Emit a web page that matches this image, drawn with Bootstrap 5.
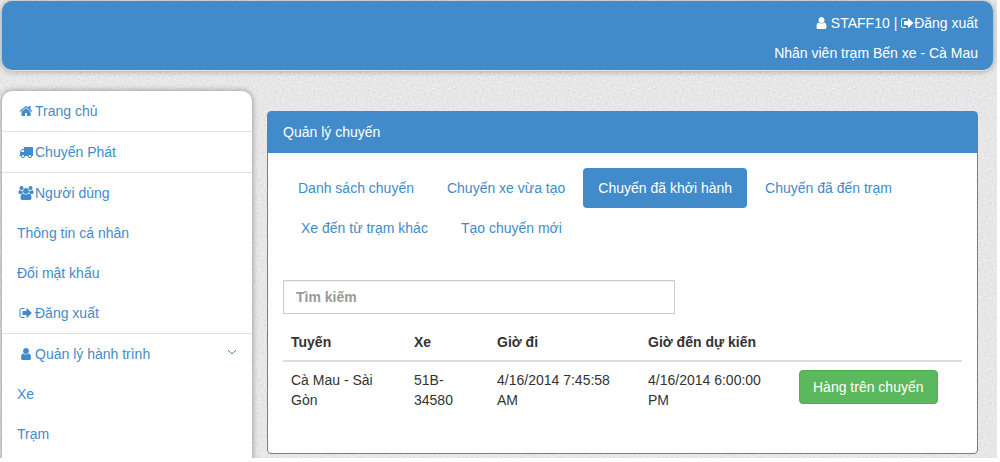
<!DOCTYPE html>
<html lang="vi">
<head>
<meta charset="utf-8">
<meta name="viewport" content="width=device-width, initial-scale=1">
<title>Quản lý chuyến</title>
<link href="https://cdn.jsdelivr.net/npm/bootstrap@5.3.0/dist/css/bootstrap.min.css" rel="stylesheet">
<style>
  :root { --brand: #428bca; }
  body {
    font-family: "Liberation Sans", Arial, sans-serif;
    font-size: 14px;
    line-height: 20px;
    color: #333;
    background: #fff;
  }
  a { color: var(--brand); text-decoration: none; }
  .page-shell {
    height: 100vh;
    border: solid #fff;
    border-width: 0 3px 4px 0;
    overflow: hidden;
    padding: 1px 4px 0 2px;
    background-color: #e7e7e7;
    background-image: url("data:image/svg+xml,%3Csvg xmlns='http://www.w3.org/2000/svg' width='200' height='200'%3E%3Cfilter id='n' x='0' y='0' width='1' height='1' color-interpolation-filters='sRGB'%3E%3CfeTurbulence type='fractalNoise' baseFrequency='.5' numOctaves='2' stitchTiles='stitch'/%3E%3CfeColorMatrix values='.13 0 0 0 .84 .13 0 0 0 .84 .13 0 0 0 .84 0 0 0 0 1'/%3E%3C/filter%3E%3Crect width='200' height='200' filter='url(%23n)'/%3E%3C/svg%3E");
  }
  .top-bar {
    background: var(--brand);
    color: #fff;
    border-radius: 10px;
    padding: 12px 15px 7px;
    margin-bottom: 21px;
    box-shadow: 0 1px 0 #e4e4e4, 0 1px 6px rgba(0, 0, 0, .35);
  }
  .top-bar p { margin-bottom: 10px; }
  .top-bar p:last-child { margin-bottom: 0; }
  .top-bar a { color: #fff; }
  .side-menu {
    flex: 0 0 250px;
    background: #fff;
    border-radius: 10px;
    box-shadow: 0 0 6px rgba(0, 0, 0, .4);
    min-height: 600px;
  }
  .side-menu ul + ul { border-top: 1px solid #e1e1e1; }
  .side-menu .nav-link { color: var(--brand); padding: 10px 15px; }
  .fa-icon { height: 14px; width: 14px; fill: currentColor; vertical-align: -2px; overflow: visible; }
  .fa-fixed { width: 18px; }
  .user-icon { width: 11px; }
  .out-icon { width: 13px; }
  .caret-icon { width: 10px; height: 6px; fill: none; stroke: currentColor; margin-top: 5px; }
  .trip-panel {
    border: 1px solid var(--brand);
    border-radius: 4px;
    margin: 20px 15px 0;
  }
  .trip-panel .card-header {
    background: var(--brand);
    color: #fff;
    border: 0;
    border-radius: 2px 2px 0 0;
    padding: 10px 15px 11px;
  }
  .trip-panel .card-body { padding: 15px; }
  .trip-tabs { --bs-nav-pills-border-radius: 4px; margin-bottom: 32px; }
  .trip-tabs .nav-link { padding: 10px 15px; color: var(--brand); }
  .trip-tabs .nav-link.active { background: var(--brand); color: #fff; }
  .trip-tabs .nav-item + .nav-item { margin-left: 3px; }
  .search-box {
    width: 392px;
    max-width: 100%;
    height: 34px;
    padding: 6px 12px;
    font-size: 14px;
    line-height: 20px;
    font-weight: bold;
    border: 1px solid #ccc;
    border-radius: 0;
    box-shadow: inset 0 1px 1px rgba(0, 0, 0, .075);
    margin-bottom: 10px;
  }
  .search-box::placeholder { color: #999; }
  .trip-table { margin-bottom: 20px; table-layout: fixed; --bs-table-color: #333; color: #333; }
  .trip-table > * > tr > * { padding: 8px; border: 0; }
  .trip-table > thead { border-bottom: 2px solid #ddd; }
  .w-route { width: 123px; }
  .w-bus { width: 83px; }
  .w-time { width: 151px; }
  .btn-cargo {
    --bs-btn-color: #fff;
    --bs-btn-bg: #5cb85c;
    --bs-btn-border-color: #4cae4c;
    --bs-btn-hover-color: #fff;
    --bs-btn-hover-bg: #47a447;
    --bs-btn-hover-border-color: #398439;
    font-size: 14px;
    line-height: 20px;
    padding: 6px 13px;
    border-radius: 4px;
  }
</style>
</head>
<body>
<svg class="d-none" aria-hidden="true">
  <symbol id="i-home" viewBox="0 0 1792 1792"><path d="M1472 992v480q0 26-19 45t-45 19h-384v-384h-256v384h-384q-26 0-45-19t-19-45v-480q0-1 .5-3t.5-3l575-474 575 474q1 2 1 6zm223-69l-62 74q-8 9-21 11h-3q-13 0-21-7l-692-577-692 577q-12 8-24 7-13-2-21-11l-62-74q-8-10-7-23.5t11-21.5l719-599q32-26 76-26t76 26l244 204v-195q0-14 9-23t23-9h192q14 0 23 9t9 23v408l219 182q10 8 11 21.5t-7 23.5z"/></symbol>
  <symbol id="i-user" viewBox="192 0 1408 1792"><path d="M1536 1399q0 109-62.5 187t-150.5 78h-854q-88 0-150.5-78t-62.5-187q0-85 8.5-160.5t31.5-152 58.5-131 94-89 134.5-34.5q131 128 313 128t313-128q76 0 134.5 34.5t94 89 58.5 131 31.5 152 8.5 160.5zm-256-887q0 159-112.5 271.5t-271.5 112.5-271.5-112.5-112.5-271.5 112.5-271.5 271.5-112.5 271.5 112.5 112.5 271.5z"/></symbol>
  <symbol id="i-out" viewBox="64 0 1664 1792"><path d="M704 1440q0 4 1 20t.5 26.5-3 23.5-10 19.5-20.5 6.5h-320q-119 0-203.5-84.5t-84.5-203.5v-704q0-119 84.5-203.5t203.5-84.5h320q13 0 22.5 9.5t9.5 22.5q0 4 1 20t.5 26.5-3 23.5-10 19.5-20.5 6.5h-320q-66 0-113 47t-47 113v704q0 66 47 113t113 47h312l11.5 1 11.5 3 8 5.5 7 9 2 13.5zm928-544q0 26-19 45l-544 544q-19 19-45 19t-45-19-19-45v-288h-448q-26 0-45-19t-19-45v-384q0-26 19-45t45-19h448v-288q0-26 19-45t45-19 45 19l544 544q19 19 19 45z"/></symbol>
  <symbol id="i-truck" viewBox="0 0 1792 1792"><path d="M640 1408q0-52-38-90t-90-38-90 38-38 90 38 90 90 38 90-38 38-90zm-384-512h384v-256h-158q-13 0-22 9l-195 195q-9 9-9 22v30zm1280 512q0-52-38-90t-90-38-90 38-38 90 38 90 90 38 90-38 38-90zm256-1088v1024q0 15-4 26.5t-13.5 18.5-16.5 11.5-23.5 6-22.5 2-25.5 0-22.5-.5q0 106-75 181t-181 75-181-75-75-181h-384q0 106-75 181t-181 75-181-75-75-181h-64q-3 0-22.5.5t-25.5 0-22.5-2-23.5-6-16.5-11.5-13.5-18.5-4-26.5q0-26 19-45t45-19v-320q0-8-.5-35t0-38 2.5-34.5 6.5-37 14-30.5 22.5-30l198-198q19-19 50.5-32t58.5-13h160v-192q0-26 19-45t45-19h1024q26 0 45 19t19 45z"/></symbol>
  <symbol id="i-users" viewBox="-64 0 1920 1792"><path d="M529 896q-162 5-265 128h-134q-82 0-138-40.5t-56-118.5q0-353 124-353 6 0 43.5 21t97.5 42.5 119 21.5q67 0 133-23-5 37-5 66 0 139 81 256zm1071 637q0 120-73 189.5t-194 69.5h-874q-121 0-194-69.5t-73-189.5q0-53 3.5-103.5t14-109 26.5-108.5 43-97.5 62-81 85.5-53.5 111.5-20q10 0 43 21.5t73 48 107 48 135 21.5 135-21.5 107-48 73-48 43-21.5q61 0 111.5 20t85.5 53.5 62 81 43 97.5 26.5 108.5 14 109 3.5 103.5zm-1024-1277q0 106-75 181t-181 75-181-75-75-181 75-181 181-75 181 75 75 181zm704 384q0 159-112.5 271.5t-271.5 112.5-271.5-112.5-112.5-271.5 112.5-271.5 271.5-112.5 271.5 112.5 112.5 271.5zm576 225q0 78-56 118.5t-138 40.5h-134q-103-123-265-128 81-117 81-256 0-29-5-66 66 23 133 23 59 0 119-21.5t97.5-42.5 43.5-21q124 0 124 353zm-128-609q0 106-75 181t-181 75-181-75-75-181 75-181 181-75 181 75 75 181z"/></symbol>
</svg>

<div class="page-shell">
  <header class="top-bar text-end">
    <p><a href="#"><svg class="fa-icon user-icon" aria-hidden="true"><use href="#i-user"/></svg> STAFF10</a> | <a href="#"><svg class="fa-icon out-icon" aria-hidden="true"><use href="#i-out"/></svg>Đăng xuất</a></p>
    <p>Nhân viên trạm Bến xe - Cà Mau</p>
  </header>

  <div class="d-flex align-items-start">
    <nav class="side-menu" aria-label="Menu">
      <ul class="nav flex-column">
        <li><a class="nav-link" href="#"><svg class="fa-icon fa-fixed" aria-hidden="true"><use href="#i-home"/></svg>Trang chủ</a></li>
      </ul>
      <ul class="nav flex-column">
        <li><a class="nav-link" href="#"><svg class="fa-icon fa-fixed" aria-hidden="true"><use href="#i-truck"/></svg>Chuyển Phát</a></li>
      </ul>
      <ul class="nav flex-column">
        <li><a class="nav-link" href="#"><svg class="fa-icon fa-fixed" aria-hidden="true"><use href="#i-users"/></svg>Người dùng</a></li>
        <li><a class="nav-link" href="#">Thông tin cá nhân</a></li>
        <li><a class="nav-link" href="#">Đổi mật khẩu</a></li>
        <li><a class="nav-link" href="#"><svg class="fa-icon fa-fixed" aria-hidden="true"><use href="#i-out"/></svg>Đăng xuất</a></li>
      </ul>
      <ul class="nav flex-column">
        <li><a class="nav-link d-flex justify-content-between" href="#"><span><svg class="fa-icon fa-fixed" aria-hidden="true"><use href="#i-user"/></svg>Quản lý hành trình</span><svg class="caret-icon" viewBox="0 0 10 6" aria-hidden="true"><path d="M1 1l4 4 4-4"/></svg></a></li>
        <li><a class="nav-link" href="#">Xe</a></li>
        <li><a class="nav-link" href="#">Trạm</a></li>
      </ul>
    </nav>

    <main class="flex-fill">
      <section class="card trip-panel">
        <div class="card-header">Quản lý chuyến</div>
        <div class="card-body">
          <ul class="nav nav-pills trip-tabs">
            <li class="nav-item"><a class="nav-link" href="#">Danh sách chuyến</a></li>
            <li class="nav-item"><a class="nav-link" href="#">Chuyến xe vừa tạo</a></li>
            <li class="nav-item"><a class="nav-link active" aria-current="page" href="#">Chuyến đã khởi hành</a></li>
            <li class="nav-item"><a class="nav-link" href="#">Chuyến đã đến trạm</a></li>
            <li class="nav-item"><a class="nav-link" href="#">Xe đến từ trạm khác</a></li>
            <li class="nav-item"><a class="nav-link" href="#">Tạo chuyến mới</a></li>
          </ul>
          <input type="search" class="form-control search-box" placeholder="Tìm kiếm" aria-label="Tìm kiếm">
          <table class="table trip-table">
            <thead>
              <tr>
                <th class="w-route" scope="col">Tuyến</th>
                <th class="w-bus" scope="col">Xe</th>
                <th class="w-time" scope="col">Giờ đi</th>
                <th class="w-time" scope="col">Giờ đến dự kiến</th>
                <td></td>
              </tr>
            </thead>
            <tbody>
              <tr>
                <td>Cà Mau - Sài Gòn</td>
                <td>51B-34580</td>
                <td>4/16/2014 7:45:58 AM</td>
                <td>4/16/2014 6:00:00 PM</td>
                <td><button type="button" class="btn btn-cargo">Hàng trên chuyến</button></td>
              </tr>
            </tbody>
          </table>
        </div>
      </section>
    </main>
  </div>
</div>
<script src="https://cdn.jsdelivr.net/npm/bootstrap@5.3.0/dist/js/bootstrap.bundle.min.js"></script>
</body>
</html>
